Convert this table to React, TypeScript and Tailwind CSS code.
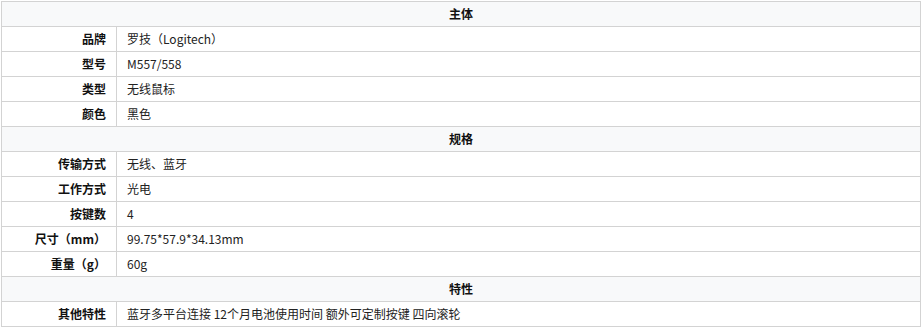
import React from "react"

type Row = { label: string; value: string }
type Section = { title: string; rows: Row[] }

const sections: Section[] = [
  {
    title: "主体",
    rows: [
      { label: "品牌", value: "罗技（Logitech）" },
      { label: "型号", value: "M557/558" },
      { label: "类型", value: "无线鼠标" },
      { label: "颜色", value: "黑色" },
    ],
  },
  {
    title: "规格",
    rows: [
      { label: "传输方式", value: "无线、蓝牙" },
      { label: "工作方式", value: "光电" },
      { label: "按键数", value: "4" },
      { label: "尺寸（mm）", value: "99.75*57.9*34.13mm" },
      { label: "重量（g）", value: "60g" },
    ],
  },
  {
    title: "特性",
    rows: [
      { label: "其他特性", value: "蓝牙多平台连接 12个月电池使用时间 额外可定制按键 四向滚轮" },
    ],
  },
]

export default function App() {
  return (
    <div className="bg-white w-[922px] h-[327px] overflow-hidden pt-px pl-px font-['Noto_Sans_CJK_SC','Microsoft_YaHei',sans-serif] text-[12px]">
      <div className="w-[920px] border-t border-l border-r border-[#d3d3d3]">
        {sections.map((section) => (
          <div key={section.title}>
            {/* section header */}
            <div className="h-[25px] border-b border-[#d3d3d3] bg-[#f8f9fa] flex items-center justify-center font-bold text-[#111]">
              {section.title}
            </div>
            {section.rows.map((row) => (
              <div key={row.label} className="h-[25px] border-b border-[#d3d3d3] flex">
                <div className="w-[115px] shrink-0 border-r border-[#d3d3d3] flex items-center justify-end pr-[10px] font-bold text-[#111]">
                  {row.label}
                </div>
                <div className="flex-1 flex items-center pl-[10px] text-[#222]">{row.value}</div>
              </div>
            ))}
          </div>
        ))}
      </div>
    </div>
  )
}
